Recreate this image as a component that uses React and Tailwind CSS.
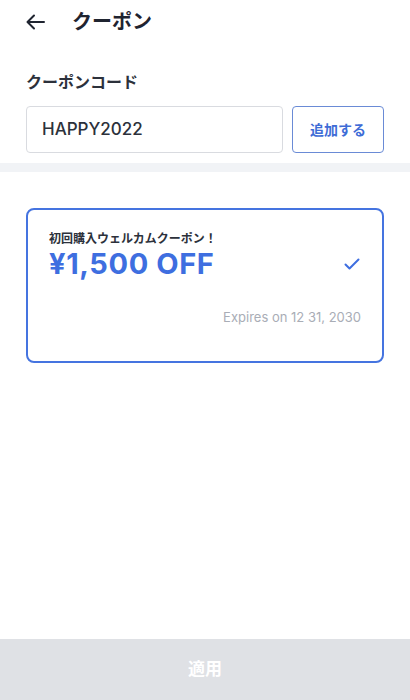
import React from 'react';

const font = { fontFamily: '"Inter", "Noto Sans CJK JP", sans-serif' };

const App = () => {
  return (
    <div className="w-[410px] h-[700px] bg-white flex flex-col text-[#1f2430] font-['Inter','Noto_Sans_CJK_JP',sans-serif]" style={font}>
      {/* Header */}
      <div className="flex items-center h-[44px] pl-[26px] gap-[27px]">
        <svg width="19" height="16" viewBox="0 0 19 16" fill="none" stroke="#1f2430" strokeWidth="2" strokeLinecap="round" strokeLinejoin="round">
          <path d="M18 8H2M8 1.5L1.5 8 8 14.5" />
        </svg>
        <h1 className="text-[20px] font-bold leading-none">クーポン</h1>
      </div>

      {/* Code input */}
      <div className="px-[26px] pt-[26px]">
        <p className="text-[16px] font-semibold text-[#2c313b] leading-[24px]">クーポンコード</p>
        <div className="flex gap-[9px] mt-[12px]">
          <div className="flex-1 h-[47px] rounded-[4px] border border-[#d9dbe0] flex items-center px-[15px] text-[17px] font-medium text-[#2c313b]">
            HAPPY2022
          </div>
          <button className="w-[92px] h-[47px] rounded-[4px] border-[1.5px] border-[#6a8bd6] text-[#3e6cd6] text-[14px] font-bold">
            追加する
          </button>
        </div>
      </div>

      <div className="h-[9px] bg-[#f1f3f6] mt-[10px]" />

      {/* Coupon card */}
      <div className="px-[26px] pt-[36px] flex-1">
        <div className="h-[155px] rounded-[8px] border-2 border-[#4574e0] px-[21px] pt-[20px]">
          <p className="text-[12px] font-bold text-[#2c313b] leading-[18px]">初回購入ウェルカムクーポン！</p>
          <div className="flex items-center justify-between">
            <p className="text-[29px] font-bold text-[#3e6ee0] leading-[32px] tracking-[0.6px]">¥1,500 OFF</p>
            <svg width="16" height="12" viewBox="0 0 16 12" fill="none" stroke="#3e6ee0" strokeWidth="2" strokeLinecap="round" strokeLinejoin="round" className="mr-[1px]">
              <path d="M1.5 6.5L5.5 10.5 14.5 1.5" />
            </svg>
          </div>
          <p className="text-right text-[13px] text-[#a9adb6] mt-[28px]">Expires on 12 31, 2030</p>
        </div>
      </div>

      {/* Apply */}
      <button className="h-[61px] bg-[#dfe1e5] text-white text-[17px] font-bold">適用</button>
    </div>
  );
};

export default App;
